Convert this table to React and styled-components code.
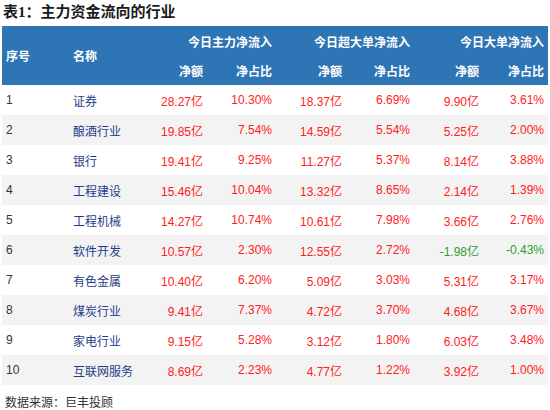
import React from "react";
import styled, { createGlobalStyle } from "styled-components";

const GlobalStyle = createGlobalStyle`
  body {
    margin: 0;
    background: #fff;
    font-family: "Liberation Sans", "Noto Sans CJK SC", sans-serif;
  }
`;

const Page = styled.div`
  width: 550px;
  height: 410px;
  padding: 0 2px;
  box-sizing: border-box;
`;

const Title = styled.h1`
  margin: 0;
  height: 26px;
  line-height: 24px;
  padding-left: 1px;
  font-family: "Liberation Serif", "Noto Sans CJK SC", serif;
  font-size: 15px;
  font-weight: bold;
  color: #1a1a1a;
`;

const cols = "67px 69px 69px 69px 70px 68px 69px 65px";

const Header = styled.div`
  display: grid;
  grid-template-columns: ${cols};
  grid-template-rows: 30px 29px;
  background: #2e75b6;
  color: #fff;
  font-size: 12px;
  font-weight: bold;
`;

const HeadCell = styled.div`
  display: flex;
  align-items: center;
  justify-content: ${(p) => (p.left ? "flex-start" : "flex-end")};
  padding: ${(p) => (p.left ? "0 0 0 4px" : "0 4px 0 0")};
  grid-row: ${(p) => p.row || "auto"};
  grid-column: ${(p) => p.col || "auto"};
  white-space: nowrap;
`;

const Row = styled.div`
  display: grid;
  grid-template-columns: ${cols};
  height: 30px;
  align-items: center;
  background: ${(p) => (p.alt ? "#f3f3f3" : "#fff")};
  font-size: 12px;
`;

const Cell = styled.div`
  padding: ${(p) => (p.left ? "0 0 0 4px" : "0 4px 0 0")};
  text-align: ${(p) => (p.left ? "left" : "right")};
  color: ${(p) => p.color || "#333"};
  white-space: nowrap;
`;

const Footer = styled.div`
  padding: 8px 0 0 3px;
  font-size: 12px;
  color: #333;
`;

const rows = [
  ["1", "证券", "28.27亿", "10.30%", "18.37亿", "6.69%", "9.90亿", "3.61%"],
  ["2", "酿酒行业", "19.85亿", "7.54%", "14.59亿", "5.54%", "5.25亿", "2.00%"],
  ["3", "银行", "19.41亿", "9.25%", "11.27亿", "5.37%", "8.14亿", "3.88%"],
  ["4", "工程建设", "15.46亿", "10.04%", "13.32亿", "8.65%", "2.14亿", "1.39%"],
  ["5", "工程机械", "14.27亿", "10.74%", "10.61亿", "7.98%", "3.66亿", "2.76%"],
  ["6", "软件开发", "10.57亿", "2.30%", "12.55亿", "2.72%", "-1.98亿", "-0.43%"],
  ["7", "有色金属", "10.40亿", "6.20%", "5.09亿", "3.03%", "5.31亿", "3.17%"],
  ["8", "煤炭行业", "9.41亿", "7.37%", "4.72亿", "3.70%", "4.68亿", "3.67%"],
  ["9", "家电行业", "9.15亿", "5.28%", "3.12亿", "1.80%", "6.03亿", "3.48%"],
  ["10", "互联网服务", "8.69亿", "2.23%", "4.77亿", "1.22%", "3.92亿", "1.00%"],
];

const valueColor = (v) => (v.startsWith("-") ? "#2ca02c" : "#ff2020");

const App = () => {
  return (
    <Page>
      <GlobalStyle />
      <Title>表1：主力资金流向的行业</Title>
      <Header>
        <HeadCell left row="1 / 3" col="1">序号</HeadCell>
        <HeadCell left row="1 / 3" col="2">名称</HeadCell>
        <HeadCell row="1" col="3 / 5">今日主力净流入</HeadCell>
        <HeadCell row="1" col="5 / 7">今日超大单净流入</HeadCell>
        <HeadCell row="1" col="7 / 9">今日大单净流入</HeadCell>
        <HeadCell row="2" col="3">净额</HeadCell>
        <HeadCell row="2" col="4">净占比</HeadCell>
        <HeadCell row="2" col="5">净额</HeadCell>
        <HeadCell row="2" col="6">净占比</HeadCell>
        <HeadCell row="2" col="7">净额</HeadCell>
        <HeadCell row="2" col="8">净占比</HeadCell>
      </Header>
      {rows.map((r, i) => (
        <Row key={r[0]} alt={i % 2 === 1}>
          <Cell left color="#333">{r[0]}</Cell>
          <Cell left color="#1f3c88">{r[1]}</Cell>
          {r.slice(2).map((v, j) => (
            <Cell key={j} color={valueColor(v)}>{v}</Cell>
          ))}
        </Row>
      ))}
      <Footer>数据来源：巨丰投顾</Footer>
    </Page>
  );
};

export default App;
